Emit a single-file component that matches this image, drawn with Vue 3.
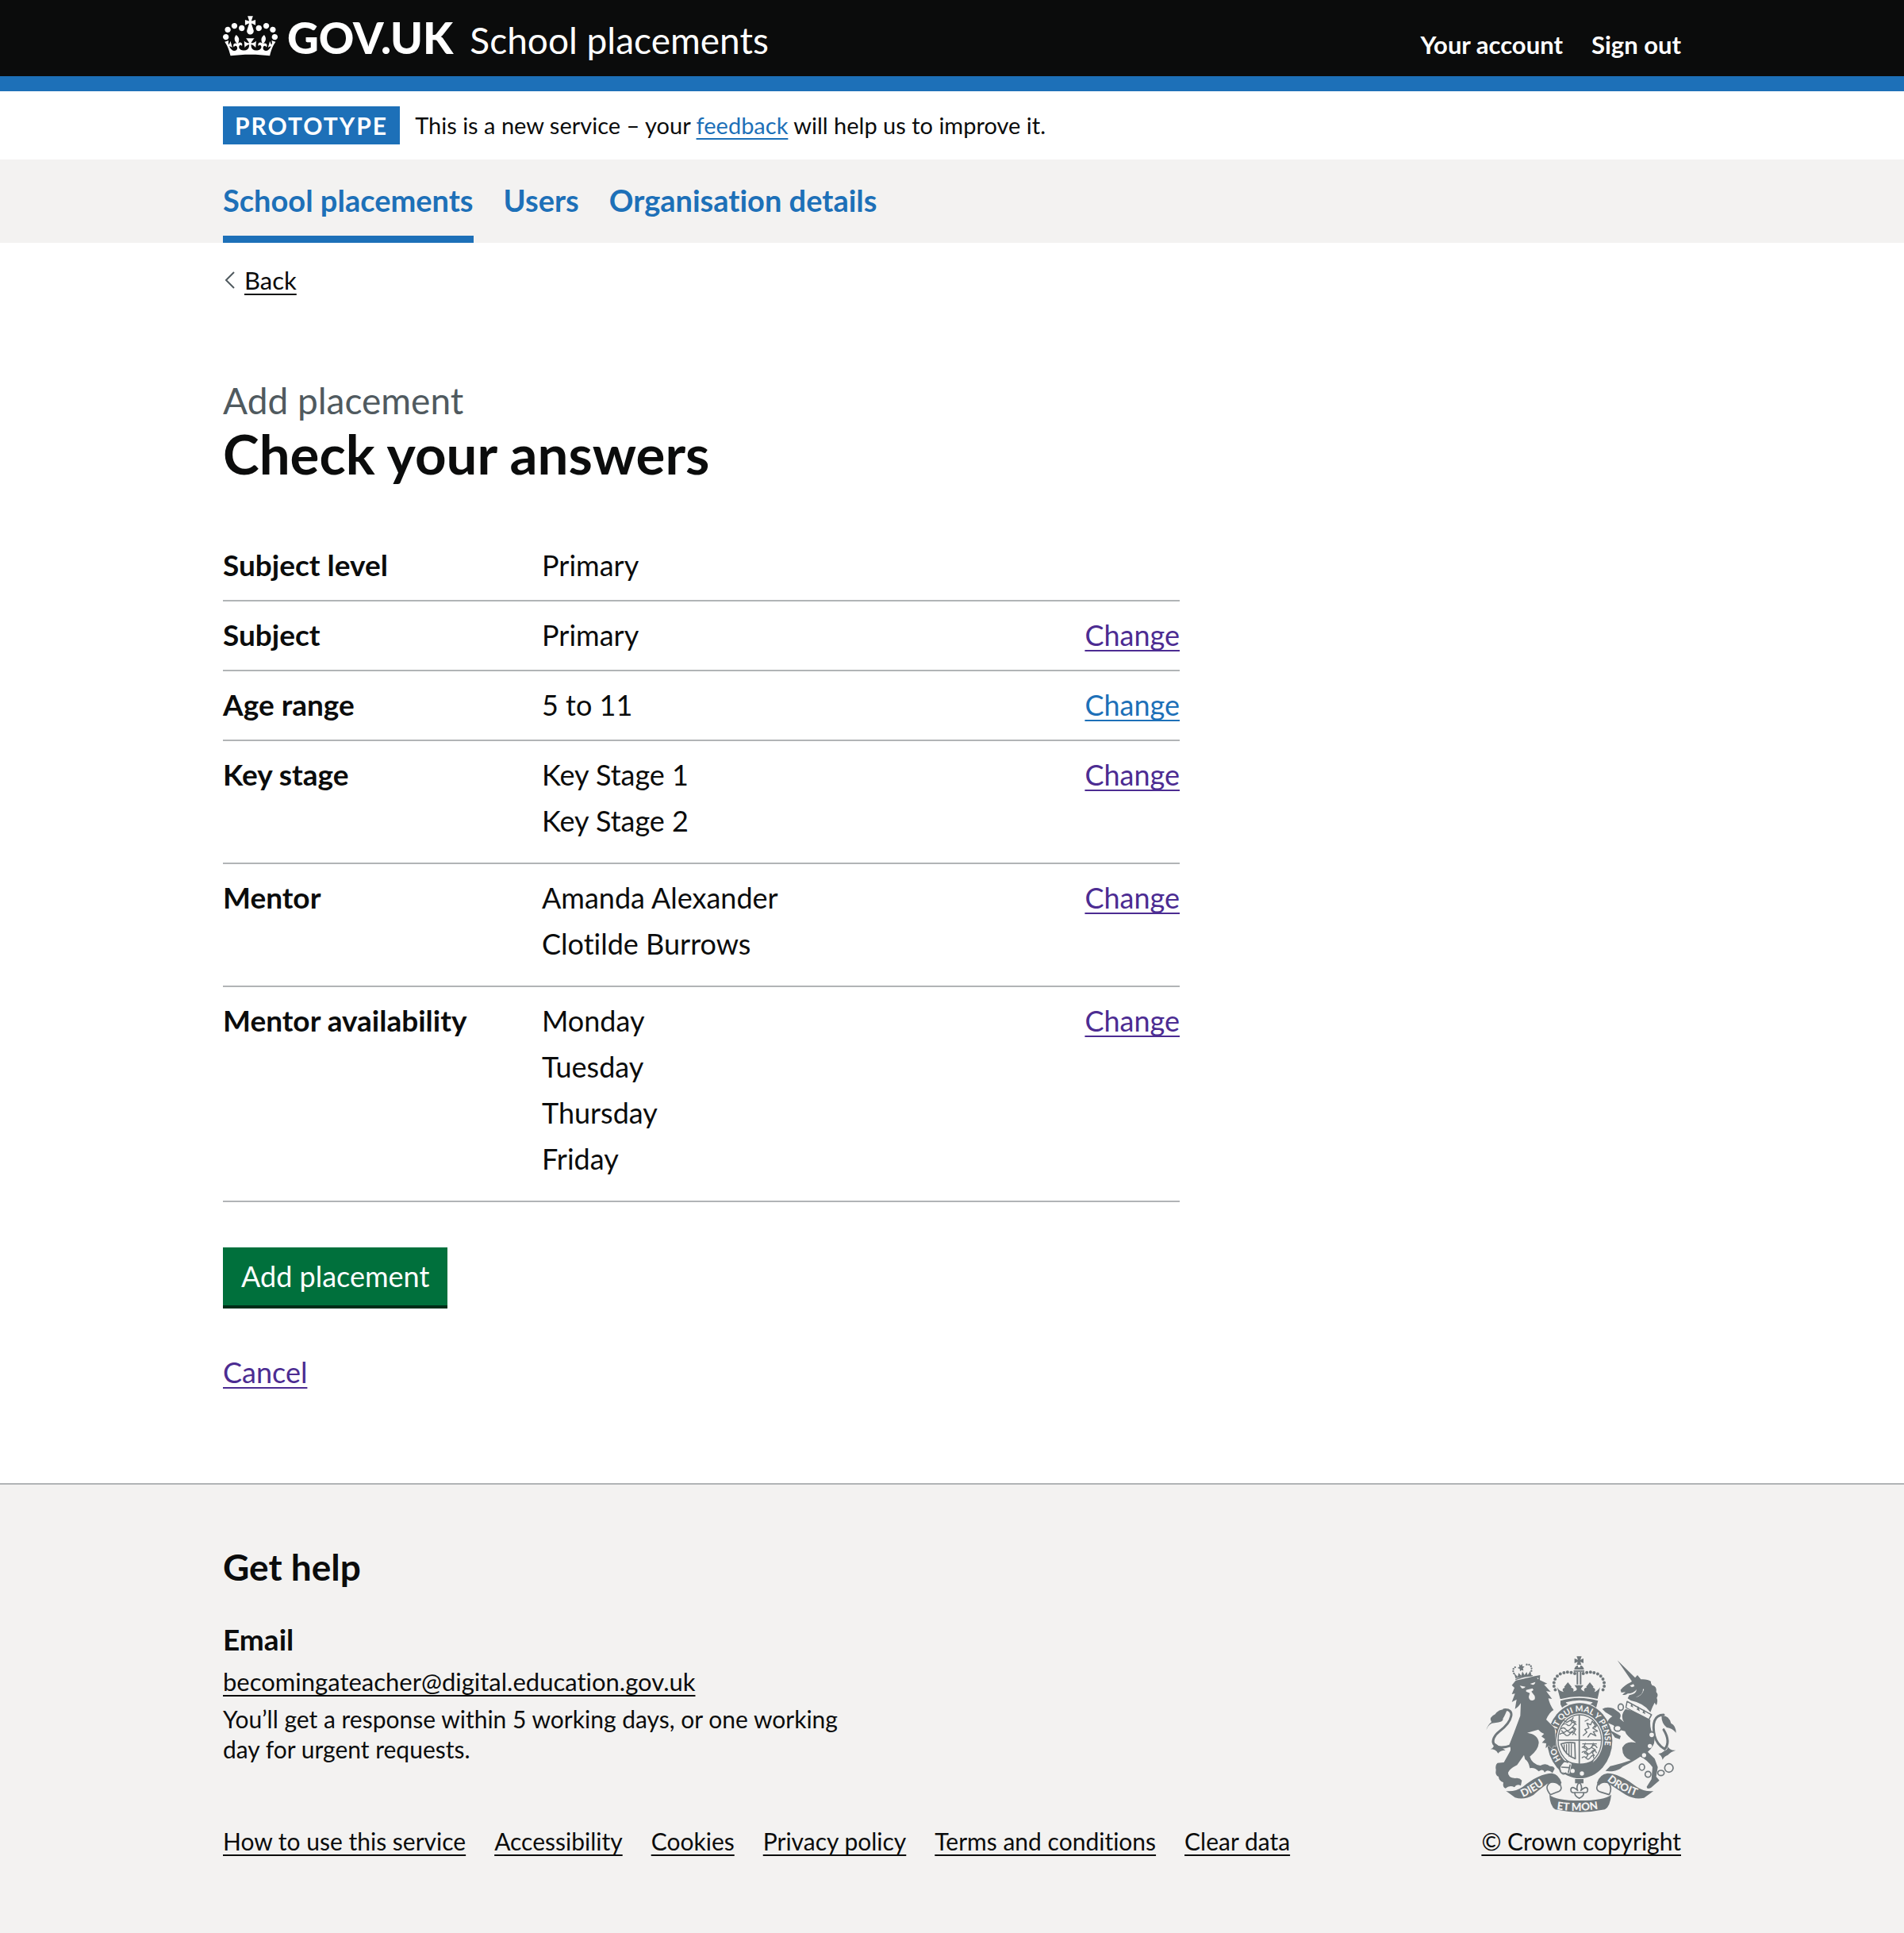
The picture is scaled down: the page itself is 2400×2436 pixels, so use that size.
<script setup>
const accountLinks = ['Your account', 'Sign out']

const navItems = [
  { label: 'School placements', current: true },
  { label: 'Users', current: false },
  { label: 'Organisation details', current: false },
]

const answers = [
  { key: 'Subject level', value: 'Primary' },
  { key: 'Subject', value: 'Primary', change: 'visited' },
  { key: 'Age range', value: '5 to 11', change: 'fresh' },
  { key: 'Key stage', list: ['Key Stage 1', 'Key Stage 2'], change: 'visited' },
  { key: 'Mentor', list: ['Amanda Alexander', 'Clotilde Burrows'], change: 'visited' },
  { key: 'Mentor availability', list: ['Monday', 'Tuesday', 'Thursday', 'Friday'], change: 'visited' },
]

const footerLinks = [
  'How to use this service',
  'Accessibility',
  'Cookies',
  'Privacy policy',
  'Terms and conditions',
  'Clear data',
]
</script>

<template>
  <div class="page">
    <header class="header">
      <div class="container header-inner">
        <a href="#" class="brand">
          <svg class="crown" viewBox="0 0 132 97" aria-hidden="true">
            <path fill="currentColor" fill-rule="evenodd" d="M25 30.2c3.5 1.5 7.7-.2 9.1-3.7 1.5-3.6-.2-7.8-3.9-9.2-3.6-1.4-7.6.3-9.1 3.9-1.4 3.5.3 7.5 3.9 9zM9 39.5c3.6 1.5 7.8-.2 9.2-3.7 1.5-3.6-.2-7.8-3.9-9.1-3.6-1.5-7.6.2-9.1 3.8-1.4 3.5.3 7.5 3.8 9zM4.4 57.2c3.5 1.5 7.7-.2 9.1-3.8 1.5-3.6-.2-7.7-3.9-9.1-3.5-1.5-7.6.3-9.1 3.8-1.4 3.5.3 7.6 3.9 9.1zm38.3-21.4c3.5 1.5 7.7-.2 9.1-3.8 1.5-3.6-.2-7.7-3.9-9.1-3.6-1.5-7.6.3-9.1 3.8-1.3 3.6.4 7.7 3.9 9.1zm64.4-5.6c-3.6 1.5-7.8-.2-9.1-3.7-1.5-3.6.2-7.8 3.8-9.2 3.6-1.4 7.7.3 9.2 3.9 1.3 3.5-.4 7.5-3.9 9zm15.9 9.3c-3.6 1.5-7.7-.2-9.1-3.7-1.5-3.6.2-7.8 3.7-9.1 3.6-1.5 7.7.2 9.2 3.8 1.5 3.5-.3 7.5-3.8 9zm4.7 17.7c-3.6 1.5-7.8-.2-9.2-3.8-1.5-3.6.2-7.7 3.9-9.1 3.6-1.5 7.7.3 9.2 3.8 1.3 3.5-.4 7.6-3.9 9.1zM89.3 35.8c-3.6 1.5-7.8-.2-9.2-3.8-1.4-3.6.2-7.7 3.9-9.1 3.6-1.5 7.7.3 9.2 3.8 1.4 3.6-.3 7.7-3.9 9.1zM69.7 17.7l8.9 4.7V9.3l-8.9 2.8c-.2-.3-.5-.6-.9-.9L72.4 0H59.6l3.5 11.2c-.3.3-.6.5-.9.9l-8.8-2.8v13.1l8.8-4.7c.3.3.6.7.9.9l-5 15.4v.1c-.2.8-.4 1.6-.4 2.4 0 4.1 3.1 7.5 7 8.1h.2c.3 0 .7.1 1 .1.4 0 .7 0 1-.1h.2c4-.6 7.1-4.1 7.1-8.1 0-.8-.1-1.7-.4-2.4V34l-5.1-15.4c.4-.2.7-.6 1-.9zM66 92.8c16.9 0 32.8 1.1 47.1 3.2 4-16.9 8.9-26.7 14-33.5l-9.6-3.4c1 4.9 1.1 7.2 0 10.2-1.5-1.4-3-4.3-4.2-8.7L108.6 76c2.8-2 5-3.2 7.5-3.3-4.4 9.4-10 11.9-13.6 11.2-4.3-.8-6.3-4.6-5.6-7.9 1-4.7 5.7-5.9 8-.5 4.3-8.7-3-11.4-7.6-8.8 7.1-7.2 7.9-13.5 2.1-21.1-8 6.1-8.1 12.3-4.5 20.8-4.7-5.4-12.1-2.5-9.5 6.2 3.4-5.2 7.9-2 7.2 3.1-.6 4.3-6.4 7.8-13.5 7.2-10.3-.9-10.9-8-11.2-13.8 2.5-.5 7.1 1.8 11 7.3L80.2 60c-4.1 4.4-8 5.3-12.3 5.4 1.4-4.4 8-11.6 8-11.6H55.5s6.4 7.2 7.9 11.6c-4.2-.1-8-1-12.3-5.4l1.4 16.4c3.9-5.5 8.5-7.7 10.9-7.3-.3 5.8-.9 12.8-11.1 13.8-7.2.6-12.9-2.9-13.5-7.2-.7-5 3.8-8.3 7.1-3.1 2.7-8.7-4.6-11.6-9.4-6.2 3.7-8.5 3.6-14.7-4.6-20.8-5.8 7.6-5 13.9 2.2 21.1-4.7-2.6-11.9.1-7.7 8.8 2.3-5.5 7.1-4.2 8.1.5.7 3.3-1.3 7.1-5.7 7.9-3.5.7-9-1.8-13.5-11.2 2.5.1 4.7 1.3 7.5 3.3l-4.7-15.4c-1.2 4.4-2.7 7.2-4.3 8.7-1.1-3-.9-5.3 0-10.2l-9.5 3.4c5 6.9 9.9 16.7 14 33.5 14.8-2.1 30.8-3.2 47.7-3.2z" />
          </svg>
          <span class="logotype">GOV.UK</span>
          <span class="product">School placements</span>
        </a>
        <nav class="account" aria-label="Account">
          <a v-for="link in accountLinks" :key="link" href="#">{{ link }}</a>
        </nav>
      </div>
    </header>

    <div class="container phase">
      <strong class="tag">PROTOTYPE</strong>
      <span class="phase-text">This is a new service – your <a href="#" class="link">feedback</a> will help us to improve it.</span>
    </div>

    <nav class="primary" aria-label="Primary">
      <ul class="container primary-list">
        <li v-for="item in navItems" :key="item.label">
          <a href="#" :class="{ current: item.current }" :aria-current="item.current ? 'page' : null">{{ item.label }}</a>
        </li>
      </ul>
    </nav>

    <div class="container content">
      <a href="#" class="back">
        <svg class="chevron" viewBox="0 0 13 22" aria-hidden="true">
          <path d="M12 1 2 11l10 10" fill="none" stroke="#505a5f" stroke-width="2" />
        </svg>
        <span class="back-text">Back</span>
      </a>

      <main class="main">
        <h1 class="title"><span class="caption">Add placement</span>Check your answers</h1>

        <dl class="summary">
          <div v-for="row in answers" :key="row.key" class="row">
            <dt>{{ row.key }}</dt>
            <dd>
              <ul v-if="row.list" class="values">
                <li v-for="item in row.list" :key="item">{{ item }}</li>
              </ul>
              <template v-else>{{ row.value }}</template>
            </dd>
            <dd v-if="row.change">
              <a href="#" class="link" :class="row.change" :aria-label="'Change ' + row.key.toLowerCase()">Change</a>
            </dd>
          </div>
        </dl>

        <button type="button" class="button">Add placement</button>
        <p class="cancel"><a href="#" class="link visited">Cancel</a></p>
      </main>
    </div>

    <footer class="footer">
      <div class="container footer-inner">
        <div class="meta">
          <h2>Get help</h2>
          <h3>Email</h3>
          <p class="email"><a href="#" class="link plain">becomingateacher@digital.education.gov.uk</a></p>
          <p class="response">You’ll get a response within 5 working days, or one working day for urgent requests.</p>
          <ul class="footer-links">
            <li v-for="link in footerLinks" :key="link"><a href="#" class="link plain">{{ link }}</a></li>
          </ul>
        </div>

        <div class="copyright">
          <svg class="crest" viewBox="70 50 720 591" aria-hidden="true">
            <defs>
              <path id="garter-line" d="M354 442A94 110 0 0 1 425 260A94 110 0 0 1 490 450" />
              <path id="dieu-line" d="M209 584Q264 560 306 522" />
              <path id="droit-line" d="M528 520Q566 556 652 584" />
              <path id="mon-line" d="M338 629Q422 642 512 625" />
            </defs>

            <!-- imperial crown -->
            <g class="ink">
              <path d="M413 51h19l-5 13 12-5v18l-12-5 4 11h-18l4-11-12 5V59l13 5z" />
              <path d="M404 101q2-14 14-16v8h9v-8q12 2 14 16z" />
              <path d="M402 104h40v5h-40zM413 110h6v47h-6zM425 110h6v47h-6z" />
              <path d="M351 212l-12-44q10 16 25 18-10-12 4-16 8 0 8 12l-10-16 14-17 14 17-8 16q0-14 9-12 10 4 5 14 14-2 14-10l-9-14h34l-10 14q4 8 14 10-5-10 4-14 10-2 10 12l-8-16 14-17 14 17-10 16q0-12 9-12 12 4 4 16 13-4 22-18l-10 44q-70-18-137 0z" />
              <path d="M352 232v-13q70-22 142 0l-7 26q-12-10-22-13 8-4 9-7-50-16-102 0 2 5 8 7-14 6-22 13z" />
            </g>
            <path class="beads" d="M406 116Q380 105 350 118 322 136 328 168L338 190M438 116Q464 105 494 118 522 136 517 168L507 190" />

            <!-- garter and shield -->
            <ellipse class="ink" cx="425" cy="370" rx="123" ry="142" />
            <ellipse class="paper" cx="425" cy="368" rx="88" ry="102" />
            <ellipse class="line thin" cx="425" cy="368" rx="82" ry="96" />
            <path class="line" d="M423 274v188M343 368h164" />
            <path class="ink" d="M371 441q50 30 107 2l-8 23q-45 22-88-3z" />
            <g class="line scribble">
              <path d="M360 310q10-8 18 0t15-5 18 4M354 325q10-8 18 2t18-2 20 2M350 345q12-8 20 2t18-3 22 4M366 295l10 6 16-10 18 8M356 332l8 8 12-8 12 8 14-8M400 283l-8 14 16 8-12 14 12 12-10 16" />
              <path d="M438 350l14-12-8-10 16-6-8-18 14 6 6-14 12 16-10 10 18 12-16 2 10 16-20-10-10 14M445 296l12-6M480 300l10 12-8 8" />
              <path d="M436 382h52M434 395q10-8 18 2t18-4 20 3M434 414q10-8 18 2t18-4 18 3M434 434q10-8 16 2t16-4 12 3M446 380l-6 16 14 8-12 12 14 8-8 12M476 380l-6 16 14 8-12 12 8 10" />
            </g>
            <path class="line" d="M354 382q24-8 52-4l2 60q-38-12-54-56z" />
            <path class="line scribble" d="M366 386v22M375 384v34M384 382v46M393 382v50" />
            <text class="motto garter"><textPath href="#garter-line">HO&#160;&#160;&#160;&#160;SOIT QUI MAL Y PENSE</textPath></text>

            <!-- garter buckle -->
            <path class="paper" d="M350 470l20-25 24 12-8 38-30-6z" />
            <path class="line" d="M380 452q-20-10-28 10t4 30q10 8 16 0M357 470l28 2M388 462l-6 28" />
            <circle class="paper" cx="398" cy="484" r="8" />
            <circle class="paper" cx="433" cy="494" r="8" />

            <!-- lion -->
            <path class="ink halo" d="M168 160L183 142Q230 132 247 127L275 122 274 141 302 154 290 158 315 185 298 183 320 212 306 210Q312 236 326 254 310 262 298 290L330 322 336 392 326 388 320 400 308 388 296 398 298 380 282 378 294 364 280 354 290 344Q276 338 268 328L226 340Q268 346 270 378 268 406 236 430 244 458 276 464 296 452 312 466 328 466 330 476L322 492Q302 474 292 490 286 474 270 486 254 470 236 474 232 448 218 440L214 424 188 462Q160 476 154 490 152 508 180 512 196 508 206 520L202 540Q186 532 178 546 160 536 144 550 132 548 136 528 118 522 118 506 104 502 108 480 104 462 114 454L138 452 160 412Q168 400 158 386L176 340 200 276 202 228Q190 246 180 250L186 214 168 224 180 192 168 194 178 170z" />
            <path class="paper" d="M198 162l22 4q-6 8-14 6zM237 155l20-7q-2 10-10 11zM222 178l24-6 4 6-8 6 12 16q6 16-8 18-14 0-14-14l4-14-14-6zM263 132l7 2-4 4z" />
            <path class="line tail" d="M166 388C92 412 78 368 122 334 172 296 182 248 138 253" />
            <path class="ink" d="M71 330Q77 310 91 300 79 282 105 270 119 248 151 251 141 277 135 285 137 301 103 303 81 303 71 330zM87 402Q104 396 100 376L122 392 144 406Q124 406 116 418 108 402 87 402z" />
            <path class="line thin" d="M183 138q30-12 62-14" />
            <path class="ink" d="M182 134l-6-20 14 14 4-14 10 10 4-16 8 14 8-12 4 12 10-16 5 20q-32 0-61 8zM195 80l6 5 6-5 1 8 8 2-6 6 2 9-8-2-5 5-1-9-8-4 7-5z" />
            <path class="beads small" d="M176 116q-10-22 12-26M242 106q4-26-18-24" />

            <!-- unicorn -->
            <path class="ink" d="M567 66L645 142 625 150zM579 178Q593 160 619 148L643 122 656 138Q680 136 694 146 692 154 698 160 718 164 714 186 724 196 716 208 722 222 714 236L708 226Q700 240 692 262 668 228 618 218L606 210 612 198Q638 194 640 176 628 192 606 192 598 200 586 196L598 186 582 188z" />
            <path class="paper" d="M614 162l14-6 4 8-10 4zM664 174q2 22-28 32 24-4 32-30z" />
            <path class="ink" d="M598 250Q650 262 692 292 688 326 706 354 714 386 682 412L708 438 720 470 714 506 726 520 694 548Q678 556 678 544L696 516 700 470Q680 442 654 430 628 448 588 468 570 486 538 486L522 484 540 466Q580 458 618 444 584 432 586 396 600 368 638 378 600 350 596 334 566 330 552 312L530 302 546 334 580 352 576 364 558 358 532 322Q522 300 540 284L548 278 522 262 510 250Q526 240 552 248L574 264Q584 272 576 286L592 300Q576 274 598 250z" />
            <path class="line" d="M604 222l92 50-10 18-86-46z" />
            <path class="paper" d="M606 226l86 46-7 14-83-42z" />
            <path class="ink" d="M617 240l4-12 6 16zM640 252l6-13 6 20zM662 264l6-12 5 18z" />
            <path class="line tail" d="M708 352C698 306 706 272 742 272M708 352Q716 384 746 402 770 374 742 328" />
            <path class="ink" d="M734 276Q762 274 770 304 788 312 789 340 774 322 754 320 734 306 734 276zM746 408Q758 404 758 392 766 408 788 406 768 412 758 424 744 428 738 442 734 424 722 420 738 416 746 408z" />
            <circle class="paper" cx="690" cy="390" r="8" />
            <circle class="paper" cx="668" cy="425" r="8" />
            <g class="line">
              <ellipse cx="580" cy="243" rx="10" ry="12" />
              <ellipse class="paper" cx="568" cy="323" rx="13" ry="11" />
              <circle class="paper" cx="697" cy="348" r="11" />
              <ellipse cx="660" cy="470" rx="10" ry="12" />
              <circle cx="683" cy="497" r="11" />
              <ellipse cx="732" cy="492" rx="12" ry="10" />
              <circle cx="762" cy="473" r="16" />
            </g>

            <!-- motto ribbon -->
            <path class="ink" d="M146 560Q180 564 210 544 270 494 320 493 346 497 356 529L348 541Q334 523 302 533 264 561 250 575 214 596 180 585zM704 560Q670 564 640 544 574 494 530 493 500 497 490 529L496 541Q510 523 536 533 578 561 600 575 634 594 668 586z" />
            <path class="line" d="M346 526q20 30-6 38l-26 10q-26-30 0-46M498 526q-20 30 6 38l32 10q14-26-4-46" />
            <path class="ink" d="M310 574q24 22 114 22 94 0 120-22-4 44-24 56-96 20-188 0-20-14-22-56z" />
            <text class="motto"><textPath href="#dieu-line">DIEU</textPath></text>
            <text class="motto"><textPath href="#mon-line">ET MON</textPath></text>
            <text class="motto"><textPath href="#droit-line">DROIT</textPath></text>
            <path class="ink" d="M407 515h32v16h-32z" />
            <path class="line" d="M423 526q-14 18-6 32-22-20-26-4 0 16 16 12-4 12 16 22 20-10 16-22 16 4 16-12-4-16-26 4 8-14-6-32zM404 566h38" />
          </svg>
          <a href="#" class="link plain">© Crown copyright</a>
        </div>
      </div>
    </footer>
  </div>
</template>

<style>
body {
  margin: 0;
  background: #ffffff;
}
</style>

<style scoped>
.page {
  font-family: Lato, "Liberation Sans", sans-serif;
  font-size: 36px;
  line-height: 48px;
  font-variant-ligatures: none;
  color: #0b0c0c;
}
.container {
  box-sizing: border-box;
  width: calc(100% - 60px);
  max-width: 1838px;
  margin: 0 auto;
}
ul,
dl,
dd,
p,
h1,
h2,
h3 {
  margin: 0;
  padding: 0;
}
ul {
  list-style: none;
}
.link {
  color: #1d70b8;
  text-decoration: underline;
  text-decoration-thickness: 2px;
  text-underline-offset: 5px;
  text-decoration-skip-ink: none;
}
.link.visited {
  color: #4c2c92;
}
.link.plain {
  color: #0b0c0c;
}

.header {
  background: #0b0c0c;
  border-bottom: 19px solid #1d70b8;
  color: #ffffff;
}
.header-inner {
  display: flex;
  justify-content: space-between;
  align-items: baseline;
  padding: 19px 0 16px;
}
.header a {
  color: inherit;
  text-decoration: none;
}
.brand {
  display: flex;
  align-items: baseline;
  line-height: 56px;
}
.crown {
  align-self: flex-start;
  width: 69px;
  height: 51px;
  margin: 1px 12px 0 0;
}
.logotype {
  font-size: 55px;
  font-weight: 900;
  margin-right: 21px;
}
.product {
  font-size: 46px;
}
.account {
  display: flex;
  gap: 36px;
  font-size: 31px;
  font-weight: 700;
}

.phase {
  display: flex;
  gap: 19px;
  padding: 19px 0;
  font-size: 30px;
}
.phase-text {
  font-size: 29px;
}
.tag {
  padding: 0 15px;
  background: #1d70b8;
  color: #ffffff;
  letter-spacing: 2px;
}

.primary {
  background: #f3f2f1;
}
.primary-list {
  display: flex;
  gap: 38px;
}
.primary a {
  display: block;
  padding: 6px 0 0;
  border-bottom: 9px solid transparent;
  line-height: 90px;
  font-size: 38px;
  font-weight: 700;
  color: #1d70b8;
  text-decoration: none;
}
.primary a.current {
  border-color: #1d70b8;
}

.content {
  padding: 28px 0 116px;
}
.back {
  display: flex;
  align-items: center;
  gap: 12px;
  width: max-content;
  padding-left: 2px;
  font-size: 31px;
  line-height: 38px;
  color: #0b0c0c;
  text-decoration: none;
}
.chevron {
  width: 13px;
  height: 22px;
}
.back-text {
  text-decoration: underline;
  text-decoration-thickness: 2px;
  text-underline-offset: 5px;
}
.main {
  max-width: 1206px;
  padding-top: 104px;
}
.title {
  font-size: 69px;
  line-height: 77px;
  font-weight: 700;
}
.caption {
  display: block;
  font-size: 46px;
  line-height: 57px;
  font-weight: 400;
  color: #505a5f;
}
.summary {
  margin-top: 60px;
}
.row {
  display: grid;
  grid-template-columns: calc(100% / 3) 1fr auto;
  padding: 18px 0 20px;
  border-bottom: 2px solid #b1b4b6;
}
.row dt {
  font-size: 37px;
  font-weight: 700;
}
.values {
  display: flex;
  flex-direction: column;
  gap: 10px;
  padding-bottom: 9px;
}
.button {
  display: block;
  margin-top: 57px;
  padding: 12px 23px 13px;
  border: 0;
  border-bottom: 4px solid #002d18;
  background: #00703c;
  color: #ffffff;
  font: inherit;
  font-variant-ligatures: none;
}
.cancel {
  margin-top: 56px;
}

.footer {
  background: #f3f2f1;
  border-top: 2px solid #b1b4b6;
}
.footer-inner {
  display: flex;
  justify-content: space-between;
  align-items: flex-end;
  padding: 75px 0 97px;
  font-size: 30px;
  line-height: 38px;
}
.meta h2 {
  font-size: 46px;
  line-height: 57px;
}
.meta h3 {
  margin-top: 39px;
  font-size: 37px;
  line-height: 48px;
}
.email {
  margin-top: 10px;
  font-size: 31px;
}
.response {
  max-width: 800px;
  margin-top: 9px;
}
.footer-links {
  display: flex;
  flex-wrap: wrap;
  gap: 10px 36px;
  margin-top: 78px;
}
.copyright {
  display: flex;
  flex-direction: column;
  align-items: center;
  gap: 17px;
  flex: none;
}
.crest {
  width: 240px;
  height: 197px;
}
.ink {
  fill: #6f777b;
}
.halo {
  stroke: #f3f2f1;
  stroke-width: 3;
  paint-order: stroke;
}
.line {
  fill: none;
  stroke: #6f777b;
  stroke-width: 5;
  stroke-linejoin: round;
  stroke-linecap: round;
}
.line.tail {
  stroke-width: 9;
}
.line.thin,
.line.scribble {
  stroke-width: 4;
}
.paper {
  fill: #f3f2f1;
}
.beads {
  fill: none;
  stroke: #6f777b;
  stroke-width: 12;
  stroke-linecap: round;
  stroke-dasharray: 0 14;
}
.beads.small {
  stroke-width: 7;
  stroke-dasharray: 0 9;
}
.motto {
  fill: #f3f2f1;
  font-size: 40px;
  font-weight: 900;
}
.motto.garter {
  font-size: 31px;
}
</style>
